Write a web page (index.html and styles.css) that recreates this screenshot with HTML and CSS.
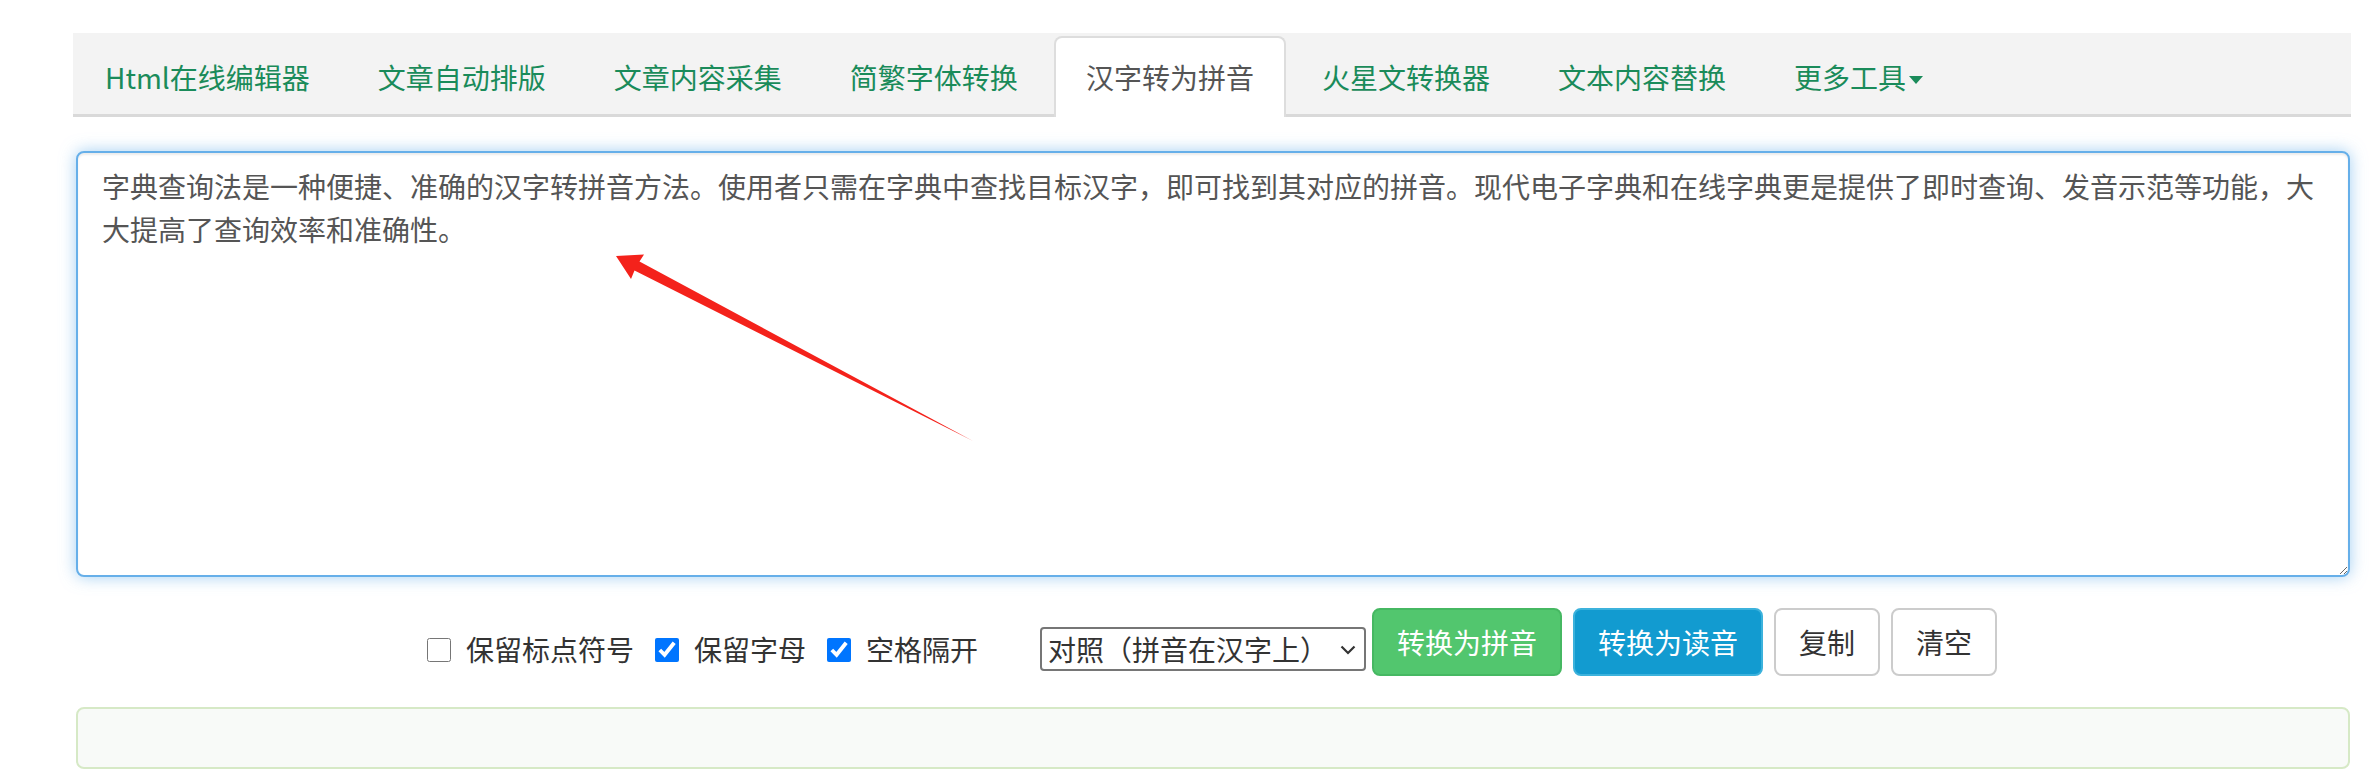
FILE: index.html
```html
<!DOCTYPE html>
<html lang="zh-CN">
<head>
<meta charset="utf-8">
<title>汉字转为拼音</title>
<link rel="stylesheet" href="styles.css">
</head>
<body>
<div class="page">
  <ul class="tabs">
    <li class="tab"><a href="#">Html在线编辑器</a></li>
    <li class="tab"><a href="#">文章自动排版</a></li>
    <li class="tab"><a href="#">文章内容采集</a></li>
    <li class="tab"><a href="#">简繁字体转换</a></li>
    <li class="tab active"><a href="#">汉字转为拼音</a></li>
    <li class="tab"><a href="#">火星文转换器</a></li>
    <li class="tab"><a href="#">文本内容替换</a></li>
    <li class="tab"><a href="#">更多工具<span class="caret"></span></a></li>
  </ul>

  <textarea class="source" spellcheck="false">字典查询法是一种便捷、准确的汉字转拼音方法。使用者只需在字典中查找目标汉字，即可找到其对应的拼音。现代电子字典和在线字典更是提供了即时查询、发音示范等功能，大大提高了查询效率和准确性。</textarea>

  <div class="controls">
    <label class="opt opt-1"><input type="checkbox" class="chk"><span>保留标点符号</span></label>
    <label class="opt opt-2"><input type="checkbox" class="chk" checked><span>保留字母</span></label>
    <label class="opt opt-3"><input type="checkbox" class="chk" checked><span>空格隔开</span></label>
    <div class="select-wrap">
      <select class="mode">
        <option>对照（拼音在汉字上）</option>
        <option>仅拼音</option>
      </select>
      <svg class="chev" width="16" height="10" viewBox="0 0 16 10"><path d="M1.5 1.5 L8 8 L14.5 1.5" fill="none" stroke="#333" stroke-width="2.2"/></svg>
    </div>
    <button class="btn btn-green">转换为拼音</button>
    <button class="btn btn-blue">转换为读音</button>
    <button class="btn btn-white">复制</button>
    <button class="btn btn-white">清空</button>
  </div>

  <div class="result"></div>
</div>

<svg class="arrow" width="2371" height="771" viewBox="0 0 2371 771">
  <polygon points="616,256 644,254.5 639.5,261.5 973,441 634.5,270.5 631,279" fill="#f4221b"/>
</svg>
</body>
</html>
```

FILE: styles.css
```css
* {
  box-sizing: border-box;
}

html, body {
  margin: 0;
  padding: 0;
  background: #ffffff;
}

body {
  position: relative;
  width: 2371px;
  height: 771px;
  overflow: hidden;
  font-family: "Noto Sans CJK SC", "Noto Sans", sans-serif;
  font-size: 28px;
  color: #333333;
}

.page {
  padding: 33px 20px 0 73px;
}

/* ---------- tabs ---------- */
.tabs {
  display: flex;
  list-style: none;
  margin: 0;
  padding: 3px 0 0 0;
  height: 84px;
  background: #f3f3f3;
  border-bottom: 3px solid #d9d9d9;
}

.tab {
  height: 81px;
  margin-right: 4px;
  margin-bottom: -3px;
}

.tab a {
  display: block;
  height: 81px;
  padding: 0 32px;
  line-height: 82px;
  color: #1a8b5a;
  text-decoration: none;
  white-space: nowrap;
}

.tab.active a {
  background: #ffffff;
  color: #555555;
  padding: 0 30px;
  border: 2px solid #dddddd;
  border-bottom: none;
  border-radius: 8px 8px 0 0;
  line-height: 79px;
}

.caret {
  display: inline-block;
  width: 0;
  height: 0;
  margin-left: 3px;
  vertical-align: middle;
  border-top: 8px solid #1a8b5a;
  border-left: 7px solid transparent;
  border-right: 7px solid transparent;
  position: relative;
  top: -1px;
}

/* ---------- textarea ---------- */
.source {
  display: block;
  width: calc(100% - 4px);
  height: 426px;
  margin: 34px 1px 0 3px;
  padding: 12px 18px 12px 24px;
  font-family: "Noto Sans CJK SC", "Noto Sans", sans-serif;
  font-size: 28px;
  line-height: 43px;
  letter-spacing: 0;
  color: #555555;
  background: #ffffff;
  border: 2px solid #66afe9;
  border-radius: 8px;
  outline: none;
  box-shadow: inset 0 2px 2px rgba(0, 0, 0, 0.075), 0 0 16px rgba(102, 175, 233, 0.6);
  resize: vertical;
}

/* ---------- controls ---------- */
.controls {
  display: flex;
  justify-content: center;
  align-items: flex-start;
  margin-top: 31px;
  height: 68px;
}

.opt {
  display: flex;
  align-items: center;
  margin-top: 29px;
  height: 25px;
  color: #333333;
  white-space: nowrap;
}

.opt span {
  line-height: 25px;
}

.opt-1, .opt-2 {
  margin-right: 21px;
}

.opt-3 {
  margin-right: 62px;
}

.chk {
  width: 24px;
  height: 24px;
  margin: 0 15px 0 0;
  accent-color: #0075ff;
}

.select-wrap {
  position: relative;
  margin-top: 19px;
  margin-right: 6px;
}

.mode {
  display: block;
  width: 326px;
  height: 44px;
  padding: 0 40px 0 6px;
  font-family: "Noto Sans CJK SC", "Noto Sans", sans-serif;
  font-size: 28px;
  color: #333333;
  background: #ffffff;
  border: 2px solid #767676;
  border-radius: 4px;
  appearance: none;
  -webkit-appearance: none;
}

.chev {
  position: absolute;
  right: 10px;
  top: 18px;
  pointer-events: none;
}

.btn {
  height: 68px;
  padding: 0 23px;
  font-family: "Noto Sans CJK SC", "Noto Sans", sans-serif;
  font-size: 28px;
  line-height: 64px;
  border-radius: 8px;
  border: 2px solid transparent;
  cursor: pointer;
  white-space: nowrap;
}

.btn + .btn {
  margin-left: 11px;
}

.btn-green {
  background: #52c66e;
  border-color: #46b862;
  color: #ffffff;
}

.btn-blue {
  margin-left: 10px;
  background: #129bd0;
  border-color: #3cb2dc;
  color: #ffffff;
}

.btn-white {
  background: #ffffff;
  border-color: #cccccc;
  color: #333333;
}

/* ---------- result ---------- */
.result {
  height: 62px;
  margin: 31px 1px 0 3px;
  background: #f8faf8;
  border: 2px solid #d6e9c6;
  border-radius: 8px;
}

/* ---------- annotation ---------- */
.arrow {
  position: absolute;
  left: 0;
  top: 0;
  pointer-events: none;
}
```
